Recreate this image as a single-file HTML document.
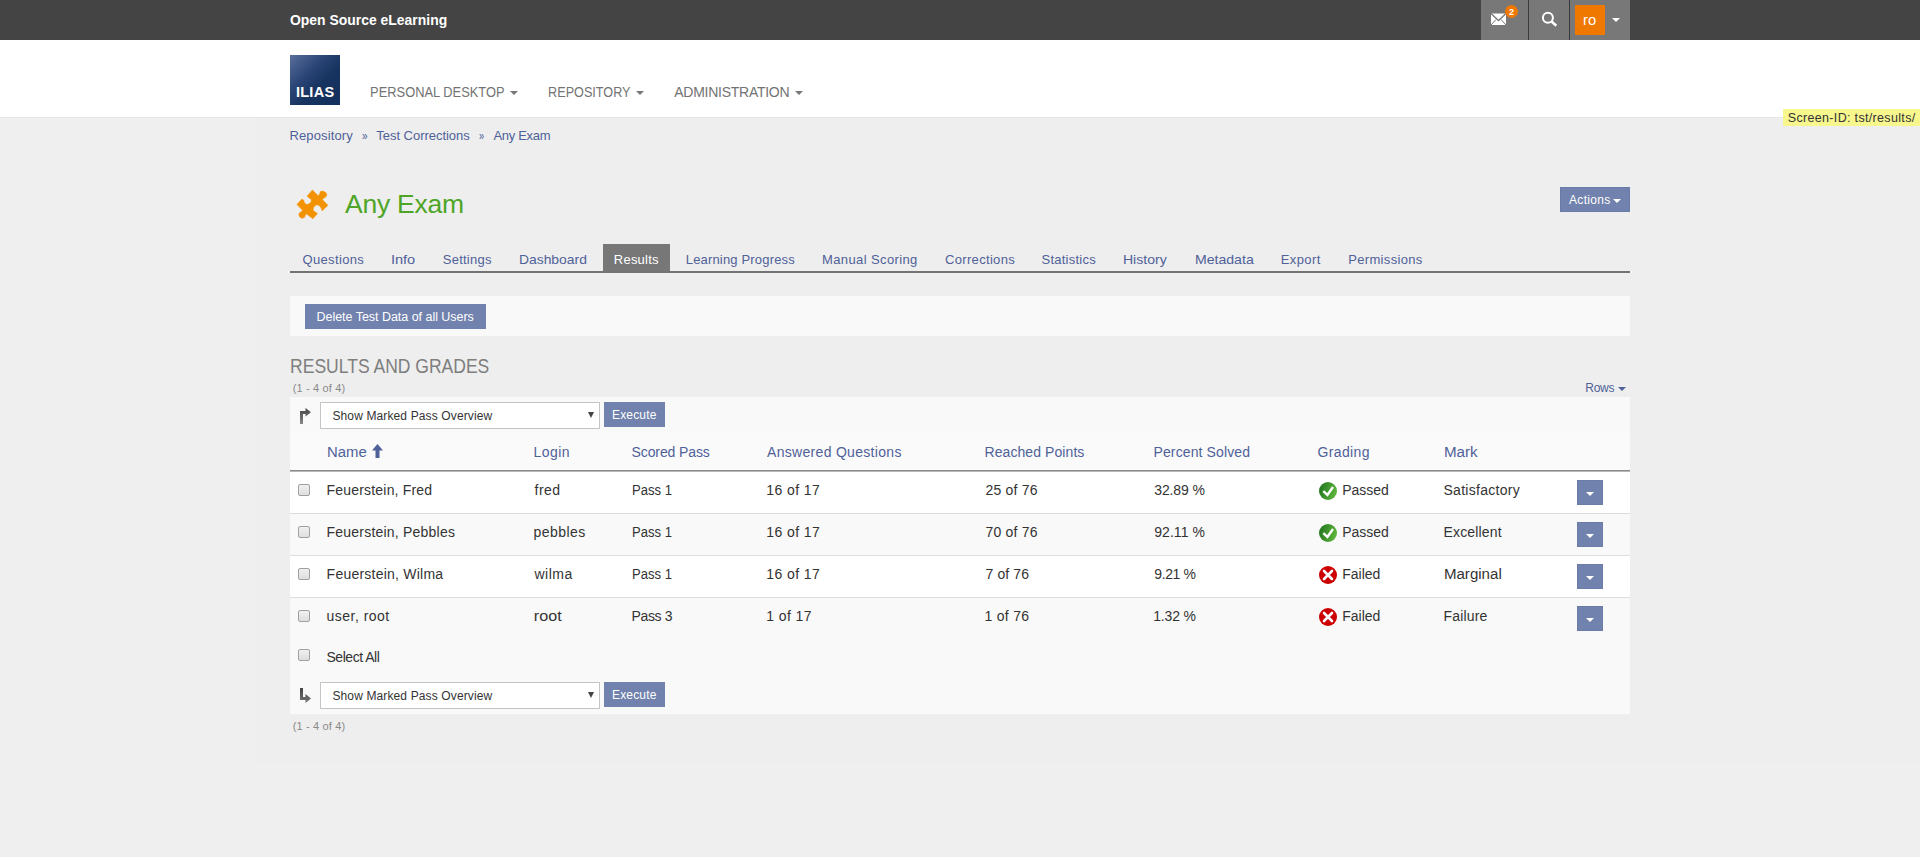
<!DOCTYPE html>
<html><head><meta charset="utf-8"><title>ILIAS - Results</title>
<style>
html,body{margin:0;padding:0}
body{width:1920px;height:857px;overflow:hidden;position:relative;background:#efefef;font-family:"Liberation Sans",sans-serif}
body>div,body>span,body>svg{position:absolute}
span{white-space:nowrap}
</style></head><body>
<div style="left:255px;top:117px;width:1665px;height:646px;background:#eeeeee;"></div>
<div style="left:0px;top:0px;width:1920px;height:40px;background:#444444;"></div>
<div style="left:1481px;top:0px;width:149px;height:40px;background:#787878;"></div>
<div style="left:1528px;top:0px;width:1px;height:40px;background:#3a3a3a;"></div>
<div style="left:1569px;top:0px;width:1px;height:40px;background:#3a3a3a;"></div>
<svg style="left:1490px;top:12px" width="17" height="14" viewBox="0 0 17 14"><path d="M1 1.5 L16 1.5 L16 13 L1 13 Z" fill="#fff"/><path d="M1 1.5 L8.5 8.5 L16 1.5" fill="none" stroke="#787878" stroke-width="1.3"/><path d="M1 13 L6 7.5 M16 13 L11 7.5" stroke="#787878" stroke-width="1"/></svg>
<div style="left:1505px;top:5px;width:13px;height:13px;border-radius:50%;background:#f07800;color:#fff;font:bold 9px/14px 'Liberation Sans',sans-serif;text-align:center">2</div>
<svg style="left:1541px;top:11px" width="17" height="17" viewBox="0 0 17 17"><circle cx="6.9" cy="6.7" r="5" fill="none" stroke="#fff" stroke-width="2"/><path d="M10.3 10.3 L15.3 14.8" stroke="#fff" stroke-width="2.5"/></svg>
<div style="left:1575px;top:5px;width:30px;height:30px;background:#ee7800;"></div>
<div style="left:1612px;top:18px;width:0;height:0;border-left:4.0px solid transparent;border-right:4.0px solid transparent;border-top:4px solid #ffffff;"></div>
<div style="left:0px;top:40px;width:1920px;height:77px;background:#ffffff;"></div>
<div style="left:0px;top:117px;width:1920px;height:1px;background:#e6e6e6;"></div>
<div style="left:290px;top:55px;width:50px;height:50px;background:linear-gradient(135deg,#5a6f9c 0%,#2b4677 35%,#17335f 60%,#13305e 100%);"></div>
<div style="left:510px;top:91px;width:0;height:0;border-left:4.0px solid transparent;border-right:4.0px solid transparent;border-top:4px solid #777777;"></div>
<div style="left:636px;top:91px;width:0;height:0;border-left:4.0px solid transparent;border-right:4.0px solid transparent;border-top:4px solid #777777;"></div>
<div style="left:795px;top:91px;width:0;height:0;border-left:4.0px solid transparent;border-right:4.0px solid transparent;border-top:4px solid #777777;"></div>
<div style="left:1783px;top:109px;width:137px;height:17px;background:#f7f78e;"></div>
<svg style="left:292px;top:184px" width="42" height="40" viewBox="0 0 42 40"><polygon points="20.45,5.98 26.4,11.93 27.8,9.75 28.2,7.76 30.57,6.97 33.75,8.56 34.9,10.94 33.35,13.3 30.97,14.5 30.37,15.7 35.93,21.25 30.17,26.8 28.98,23.63 27,21.25 24.2,20.86 21.84,22.84 21.05,25.22 21.44,26.8 25.4,29.6 20.85,34.75 14.7,29.98 13.5,30.78 12.3,33.56 9.94,34.35 7.56,32.76 6.76,30.38 7.95,28.4 10.73,26.8 10.33,26 4.98,20.46 9.94,15.1 11.92,16.49 12.32,18.87 14.3,20.46 16.68,20.06 19.06,18.08 19.46,15.7 15.1,12.13" fill="#f39200" stroke="#f39200" stroke-width="0.6" stroke-linejoin="round"/></svg>
<div style="left:1560px;top:187px;width:70px;height:25px;background:#7082ad;box-shadow:inset 0 0 0 1px #6a7ba8"></div>
<div style="left:1613px;top:199px;width:0;height:0;border-left:4.0px solid transparent;border-right:4.0px solid transparent;border-top:4px solid #ffffff;"></div>
<div style="left:603px;top:244px;width:67px;height:28px;background:#777777;"></div>
<div style="left:290px;top:271px;width:1340px;height:2px;background:#737373;"></div>
<div style="left:290px;top:296px;width:1340px;height:40px;background:#f9f9f9;"></div>
<div style="left:305px;top:304px;width:181px;height:25px;background:#7082ad;"></div>
<div style="left:290px;top:397px;width:1340px;height:317px;background:#f9f9f9;"></div>
<div style="left:290px;top:434px;width:1340px;height:36px;background:#fafafa;"></div>
<div style="left:1618px;top:387px;width:0;height:0;border-left:4.0px solid transparent;border-right:4.0px solid transparent;border-top:4px solid #4f6199;"></div>
<svg style="left:299px;top:408px" width="13" height="17" viewBox="0 0 13 17"><defs><linearGradient id="ga408" x1="0" y1="0" x2="0" y2="1"><stop offset="0" stop-color="#444"/><stop offset="1" stop-color="#888"/></linearGradient></defs><path d="M1 16 L1 3 L6.5 3 L6.5 0 L12 4.25 L6.5 8.5 L6.5 6 L4 6 L4 16 Z" fill="url(#ga408)"/></svg>
<svg style="left:299px;top:688px" width="13" height="17" viewBox="0 0 13 17"><defs><linearGradient id="ga688" x1="0" y1="0" x2="0" y2="1"><stop offset="0" stop-color="#444"/><stop offset="1" stop-color="#777"/></linearGradient></defs><path d="M1 0 L4 0 L4 9 L6.5 9 L6.5 6 L12 10.5 L6.5 15 L6.5 12 L1 12 Z" fill="url(#ga688)"/></svg>
<div style="left:320px;top:402px;width:280px;height:27px;background:#ffffff;box-shadow:inset 0 0 0 1px #c4c4c4"></div>
<div style="left:588px;top:412px;width:0;height:0;border-left:3.0px solid transparent;border-right:3.0px solid transparent;border-top:6px solid #444444;"></div>
<div style="left:604px;top:402px;width:61px;height:25px;background:#7082ad;"></div>
<div style="left:320px;top:682px;width:280px;height:27px;background:#ffffff;box-shadow:inset 0 0 0 1px #c4c4c4"></div>
<div style="left:588px;top:692px;width:0;height:0;border-left:3.0px solid transparent;border-right:3.0px solid transparent;border-top:6px solid #444444;"></div>
<div style="left:604px;top:682px;width:61px;height:25px;background:#7082ad;"></div>
<svg style="left:372px;top:444px" width="11" height="14" viewBox="0 0 11 14"><path d="M5.5 0 L11 6.5 L7.5 6.5 L7.5 14 L3.5 14 L3.5 6.5 L0 6.5 Z" fill="#4f6199"/></svg>
<div style="left:290px;top:470px;width:1340px;height:1px;background:#8a8a8a;"></div>
<div style="left:290px;top:471px;width:1340px;height:1px;background:#b8b8b8;"></div>
<div style="left:290px;top:472px;width:1340px;height:41px;background:#ffffff;"></div>
<div style="left:290px;top:513px;width:1340px;height:1px;background:#dddddd;"></div>
<div style="left:1577px;top:480px;width:26px;height:25px;background:#7082ad;box-shadow:inset 0 0 0 1px #6b7ca8"></div>
<div style="left:1586px;top:492px;width:0;height:0;border-left:4.0px solid transparent;border-right:4.0px solid transparent;border-top:4px solid #ffffff;"></div>
<svg style="left:1319px;top:482px" width="18" height="18" viewBox="0 0 18 18"><defs><linearGradient id="gg0" x1="0" y1="0" x2="1" y2="0.3"><stop offset="0" stop-color="#1c701c"/><stop offset="1" stop-color="#5cb23a"/></linearGradient></defs><circle cx="9" cy="9" r="9" fill="url(#gg0)"/><path d="M4.3 9.2 L8.4 12.9 L14 5" fill="none" stroke="#fff" stroke-width="2.4"/></svg>
<div style="left:290px;top:514px;width:1340px;height:41px;background:#f9f9f9;"></div>
<div style="left:290px;top:555px;width:1340px;height:1px;background:#dddddd;"></div>
<div style="left:1577px;top:522px;width:26px;height:25px;background:#7082ad;box-shadow:inset 0 0 0 1px #6b7ca8"></div>
<div style="left:1586px;top:534px;width:0;height:0;border-left:4.0px solid transparent;border-right:4.0px solid transparent;border-top:4px solid #ffffff;"></div>
<svg style="left:1319px;top:524px" width="18" height="18" viewBox="0 0 18 18"><defs><linearGradient id="gg1" x1="0" y1="0" x2="1" y2="0.3"><stop offset="0" stop-color="#1c701c"/><stop offset="1" stop-color="#5cb23a"/></linearGradient></defs><circle cx="9" cy="9" r="9" fill="url(#gg1)"/><path d="M4.3 9.2 L8.4 12.9 L14 5" fill="none" stroke="#fff" stroke-width="2.4"/></svg>
<div style="left:290px;top:556px;width:1340px;height:41px;background:#ffffff;"></div>
<div style="left:290px;top:597px;width:1340px;height:1px;background:#dddddd;"></div>
<div style="left:1577px;top:564px;width:26px;height:25px;background:#7082ad;box-shadow:inset 0 0 0 1px #6b7ca8"></div>
<div style="left:1586px;top:576px;width:0;height:0;border-left:4.0px solid transparent;border-right:4.0px solid transparent;border-top:4px solid #ffffff;"></div>
<svg style="left:1319px;top:566px" width="18" height="18" viewBox="0 0 18 18"><circle cx="9" cy="9" r="9" fill="#cc0000"/><path d="M5 5 L13 13 M13 5 L5 13" stroke="#fff" stroke-width="2.6" stroke-linecap="round"/></svg>
<div style="left:290px;top:598px;width:1340px;height:41px;background:#f9f9f9;"></div>
<div style="left:1577px;top:606px;width:26px;height:25px;background:#7082ad;box-shadow:inset 0 0 0 1px #6b7ca8"></div>
<div style="left:1586px;top:618px;width:0;height:0;border-left:4.0px solid transparent;border-right:4.0px solid transparent;border-top:4px solid #ffffff;"></div>
<svg style="left:1319px;top:608px" width="18" height="18" viewBox="0 0 18 18"><circle cx="9" cy="9" r="9" fill="#cc0000"/><path d="M5 5 L13 13 M13 5 L5 13" stroke="#fff" stroke-width="2.6" stroke-linecap="round"/></svg>
<div style="left:298px;top:484px;width:10px;height:10px;border:1px solid #a0a0a0;border-radius:2px;background:linear-gradient(#f0f0f0,#dedede)"></div>
<div style="left:298px;top:526px;width:10px;height:10px;border:1px solid #a0a0a0;border-radius:2px;background:linear-gradient(#f0f0f0,#dedede)"></div>
<div style="left:298px;top:568px;width:10px;height:10px;border:1px solid #a0a0a0;border-radius:2px;background:linear-gradient(#f0f0f0,#dedede)"></div>
<div style="left:298px;top:610px;width:10px;height:10px;border:1px solid #a0a0a0;border-radius:2px;background:linear-gradient(#f0f0f0,#dedede)"></div>
<div style="left:298px;top:649px;width:10px;height:10px;border:1px solid #a0a0a0;border-radius:2px;background:linear-gradient(#f0f0f0,#dedede)"></div>
<span style="left:290.30px;top:12.0px;font-size:15px;font-weight:700;line-height:15px;color:#ffffff;transform:scaleX(0.9290);transform-origin:0.0px 0;">Open Source eLearning</span>
<span style="left:1582.80px;top:12.0px;font-size:15.5px;font-weight:400;line-height:15.5px;color:#ffffff;transform:scaleX(0.9538);transform-origin:1.0px 0;">ro</span>
<span style="left:295.90px;top:85.0px;font-size:14.5px;font-weight:700;line-height:14.5px;color:#ffffff;letter-spacing:0.275px;">ILIAS</span>
<span style="left:369.70px;top:85.0px;font-size:14px;font-weight:400;line-height:14px;color:#737373;transform:scaleX(0.9193);transform-origin:1.0px 0;">PERSONAL DESKTOP</span>
<span style="left:547.80px;top:85.0px;font-size:14px;font-weight:400;line-height:14px;color:#737373;transform:scaleX(0.9022);transform-origin:1.0px 0;">REPOSITORY</span>
<span style="left:674.30px;top:85.0px;font-size:14px;font-weight:400;line-height:14px;color:#737373;letter-spacing:-0.269px;">ADMINISTRATION</span>
<span style="left:1787.75px;top:112.0px;font-size:12.5px;font-weight:400;line-height:12.5px;color:#333333;letter-spacing:0.330px;">Screen-ID: tst/results/</span>
<span style="left:289.40px;top:129.0px;font-size:13px;font-weight:400;line-height:13px;color:#4f6199;letter-spacing:0.133px;">Repository</span>
<span style="left:361.60px;top:129.0px;font-size:13px;font-weight:400;line-height:13px;color:#4f6199;transform:scaleX(0.7714);transform-origin:0.0px 0;">»</span>
<span style="left:376.30px;top:129.0px;font-size:13px;font-weight:400;line-height:13px;color:#4f6199;letter-spacing:-0.033px;">Test Corrections</span>
<span style="left:478.70px;top:129.0px;font-size:13px;font-weight:400;line-height:13px;color:#4f6199;transform:scaleX(0.7000);transform-origin:0.0px 0;">»</span>
<span style="left:493.40px;top:129.0px;font-size:13px;font-weight:400;line-height:13px;color:#4f6199;letter-spacing:-0.300px;">Any Exam</span>
<span style="left:345.10px;top:191.0px;font-size:26.5px;font-weight:400;line-height:26.5px;color:#4ea526;letter-spacing:-0.257px;">Any Exam</span>
<span style="left:1569.00px;top:194.0px;font-size:12px;font-weight:400;line-height:12px;color:#ffffff;letter-spacing:0.333px;">Actions</span>
<span style="left:302.50px;top:253.0px;font-size:13px;font-weight:400;line-height:13px;color:#4f6199;letter-spacing:0.350px;">Questions</span>
<span style="left:390.75px;top:253.0px;font-size:13px;font-weight:400;line-height:13px;color:#4f6199;transform:scaleX(1.1190);transform-origin:1.0px 0;">Info</span>
<span style="left:442.75px;top:253.0px;font-size:13px;font-weight:400;line-height:13px;color:#4f6199;letter-spacing:0.250px;">Settings</span>
<span style="left:519.00px;top:253.0px;font-size:13px;font-weight:400;line-height:13px;color:#4f6199;transform:scaleX(1.0685);transform-origin:1.0px 0;">Dashboard</span>
<span style="left:685.75px;top:253.0px;font-size:13px;font-weight:400;line-height:13px;color:#4f6199;letter-spacing:0.172px;">Learning Progress</span>
<span style="left:822.00px;top:253.0px;font-size:13px;font-weight:400;line-height:13px;color:#4f6199;letter-spacing:0.385px;">Manual Scoring</span>
<span style="left:945.00px;top:253.0px;font-size:13px;font-weight:400;line-height:13px;color:#4f6199;letter-spacing:0.325px;">Corrections</span>
<span style="left:1041.50px;top:253.0px;font-size:13px;font-weight:400;line-height:13px;color:#4f6199;letter-spacing:0.250px;">Statistics</span>
<span style="left:1123.25px;top:253.0px;font-size:13px;font-weight:400;line-height:13px;color:#4f6199;transform:scaleX(1.0813);transform-origin:1.0px 0;">History</span>
<span style="left:1194.50px;top:253.0px;font-size:13px;font-weight:400;line-height:13px;color:#4f6199;transform:scaleX(1.0849);transform-origin:1.0px 0;">Metadata</span>
<span style="left:1280.75px;top:253.0px;font-size:13px;font-weight:400;line-height:13px;color:#4f6199;letter-spacing:0.400px;">Export</span>
<span style="left:1348.25px;top:253.0px;font-size:13px;font-weight:400;line-height:13px;color:#4f6199;letter-spacing:0.325px;">Permissions</span>
<span style="left:613.80px;top:253.0px;font-size:13px;font-weight:400;line-height:13px;color:#ffffff;letter-spacing:0.233px;">Results</span>
<span style="left:316.50px;top:311.0px;font-size:12.5px;font-weight:400;line-height:12.5px;color:#ffffff;letter-spacing:-0.029px;">Delete Test Data of all Users</span>
<span style="left:290.20px;top:357.0px;font-size:19.5px;font-weight:400;line-height:19.5px;color:#7e7e7e;transform:scaleX(0.8982);transform-origin:1.0px 0;">RESULTS AND GRADES</span>
<span style="left:292.80px;top:383.0px;font-size:11px;font-weight:400;line-height:11px;color:#8a8a8a;letter-spacing:0.145px;">(1 - 4 of 4)</span>
<span style="left:1585.25px;top:382.0px;font-size:12px;font-weight:400;line-height:12px;color:#4f6199;letter-spacing:-0.283px;">Rows</span>
<span style="left:332.40px;top:410.0px;font-size:12px;font-weight:400;line-height:12px;color:#333333;letter-spacing:0.129px;">Show Marked Pass Overview</span>
<span style="left:612.00px;top:409.0px;font-size:12px;font-weight:400;line-height:12px;color:#ffffff;letter-spacing:0.167px;">Execute</span>
<span style="left:332.40px;top:690.0px;font-size:12px;font-weight:400;line-height:12px;color:#333333;letter-spacing:0.129px;">Show Marked Pass Overview</span>
<span style="left:612.00px;top:689.0px;font-size:12px;font-weight:400;line-height:12px;color:#ffffff;letter-spacing:0.167px;">Execute</span>
<span style="left:292.80px;top:721.0px;font-size:11px;font-weight:400;line-height:11px;color:#8a8a8a;letter-spacing:0.145px;">(1 - 4 of 4)</span>
<span style="left:326.60px;top:445.0px;font-size:14px;font-weight:400;line-height:14px;color:#4f6199;transform:scaleX(1.0639);transform-origin:1.0px 0;">Name</span>
<span style="left:533.50px;top:445.0px;font-size:14px;font-weight:400;line-height:14px;color:#4f6199;letter-spacing:0.438px;">Login</span>
<span style="left:631.50px;top:445.0px;font-size:14px;font-weight:400;line-height:14px;color:#4f6199;letter-spacing:-0.100px;">Scored Pass</span>
<span style="left:767.00px;top:445.0px;font-size:14px;font-weight:400;line-height:14px;color:#4f6199;letter-spacing:0.309px;">Answered Questions</span>
<span style="left:984.50px;top:445.0px;font-size:14px;font-weight:400;line-height:14px;color:#4f6199;letter-spacing:0.077px;">Reached Points</span>
<span style="left:1153.50px;top:445.0px;font-size:14px;font-weight:400;line-height:14px;color:#4f6199;letter-spacing:0.115px;">Percent Solved</span>
<span style="left:1317.50px;top:445.0px;font-size:14px;font-weight:400;line-height:14px;color:#4f6199;letter-spacing:0.375px;">Grading</span>
<span style="left:1443.50px;top:445.0px;font-size:14px;font-weight:400;line-height:14px;color:#4f6199;transform:scaleX(1.0833);transform-origin:1.0px 0;">Mark</span>
<span style="left:326.60px;top:483.0px;font-size:14px;font-weight:400;line-height:14px;color:#333333;letter-spacing:0.187px;">Feuerstein, Fred</span>
<span style="left:534.50px;top:483.0px;font-size:14px;font-weight:400;line-height:14px;color:#333333;letter-spacing:0.500px;">fred</span>
<span style="left:631.50px;top:483.0px;font-size:14px;font-weight:400;line-height:14px;color:#333333;transform:scaleX(0.9345);transform-origin:1.0px 0;">Pass 1</span>
<span style="left:766.30px;top:483.0px;font-size:14px;font-weight:400;line-height:14px;color:#333333;letter-spacing:0.421px;">16 of 17</span>
<span style="left:985.50px;top:483.0px;font-size:14px;font-weight:400;line-height:14px;color:#333333;letter-spacing:0.214px;">25 of 76</span>
<span style="left:1154.30px;top:483.0px;font-size:14px;font-weight:400;line-height:14px;color:#333333;letter-spacing:-0.133px;">32.89 %</span>
<span style="left:1342.25px;top:483.0px;font-size:14px;font-weight:400;line-height:14px;color:#333333;letter-spacing:-0.050px;">Passed</span>
<span style="left:1443.50px;top:483.0px;font-size:14px;font-weight:400;line-height:14px;color:#333333;letter-spacing:0.273px;">Satisfactory</span>
<span style="left:326.60px;top:525.0px;font-size:14px;font-weight:400;line-height:14px;color:#333333;letter-spacing:0.211px;">Feuerstein, Pebbles</span>
<span style="left:533.50px;top:525.0px;font-size:14px;font-weight:400;line-height:14px;color:#333333;letter-spacing:0.450px;">pebbles</span>
<span style="left:631.50px;top:525.0px;font-size:14px;font-weight:400;line-height:14px;color:#333333;transform:scaleX(0.9333);transform-origin:1.0px 0;">Pass 1</span>
<span style="left:766.30px;top:525.0px;font-size:14px;font-weight:400;line-height:14px;color:#333333;letter-spacing:0.421px;">16 of 17</span>
<span style="left:985.50px;top:525.0px;font-size:14px;font-weight:400;line-height:14px;color:#333333;letter-spacing:0.214px;">70 of 76</span>
<span style="left:1154.30px;top:525.0px;font-size:14px;font-weight:400;line-height:14px;color:#333333;letter-spacing:0.033px;">92.11 %</span>
<span style="left:1342.25px;top:525.0px;font-size:14px;font-weight:400;line-height:14px;color:#333333;letter-spacing:-0.050px;">Passed</span>
<span style="left:1443.50px;top:525.0px;font-size:14px;font-weight:400;line-height:14px;color:#333333;letter-spacing:0.156px;">Excellent</span>
<span style="left:326.60px;top:567.0px;font-size:14px;font-weight:400;line-height:14px;color:#333333;letter-spacing:0.231px;">Feuerstein, Wilma</span>
<span style="left:534.50px;top:567.0px;font-size:14px;font-weight:400;line-height:14px;color:#333333;letter-spacing:0.500px;">wilma</span>
<span style="left:631.50px;top:567.0px;font-size:14px;font-weight:400;line-height:14px;color:#333333;transform:scaleX(0.9333);transform-origin:1.0px 0;">Pass 1</span>
<span style="left:766.30px;top:567.0px;font-size:14px;font-weight:400;line-height:14px;color:#333333;letter-spacing:0.421px;">16 of 17</span>
<span style="left:985.50px;top:567.0px;font-size:14px;font-weight:400;line-height:14px;color:#333333;letter-spacing:0.125px;">7 of 76</span>
<span style="left:1154.30px;top:567.0px;font-size:14px;font-weight:400;line-height:14px;color:#333333;letter-spacing:-0.410px;">9.21 %</span>
<span style="left:1342.25px;top:567.0px;font-size:14px;font-weight:400;line-height:14px;color:#333333;letter-spacing:0.000px;">Failed</span>
<span style="left:1443.50px;top:567.0px;font-size:14px;font-weight:400;line-height:14px;color:#333333;transform:scaleX(1.0769);transform-origin:1.0px 0;">Marginal</span>
<span style="left:326.60px;top:609.0px;font-size:14px;font-weight:400;line-height:14px;color:#333333;letter-spacing:0.467px;">user, root</span>
<span style="left:533.50px;top:609.0px;font-size:14px;font-weight:400;line-height:14px;color:#333333;transform:scaleX(1.1522);transform-origin:1.0px 0;">root</span>
<span style="left:631.50px;top:609.0px;font-size:14px;font-weight:400;line-height:14px;color:#333333;letter-spacing:-0.360px;">Pass 3</span>
<span style="left:766.30px;top:609.0px;font-size:14px;font-weight:400;line-height:14px;color:#333333;letter-spacing:0.408px;">1 of 17</span>
<span style="left:984.50px;top:609.0px;font-size:14px;font-weight:400;line-height:14px;color:#333333;letter-spacing:0.292px;">1 of 76</span>
<span style="left:1153.30px;top:609.0px;font-size:14px;font-weight:400;line-height:14px;color:#333333;letter-spacing:-0.210px;">1.32 %</span>
<span style="left:1342.25px;top:609.0px;font-size:14px;font-weight:400;line-height:14px;color:#333333;letter-spacing:0.000px;">Failed</span>
<span style="left:1443.50px;top:609.0px;font-size:14px;font-weight:400;line-height:14px;color:#333333;letter-spacing:0.167px;">Failure</span>
<span style="left:326.50px;top:650.0px;font-size:14px;font-weight:400;line-height:14px;color:#333333;letter-spacing:-0.472px;">Select All</span>
</body></html>
